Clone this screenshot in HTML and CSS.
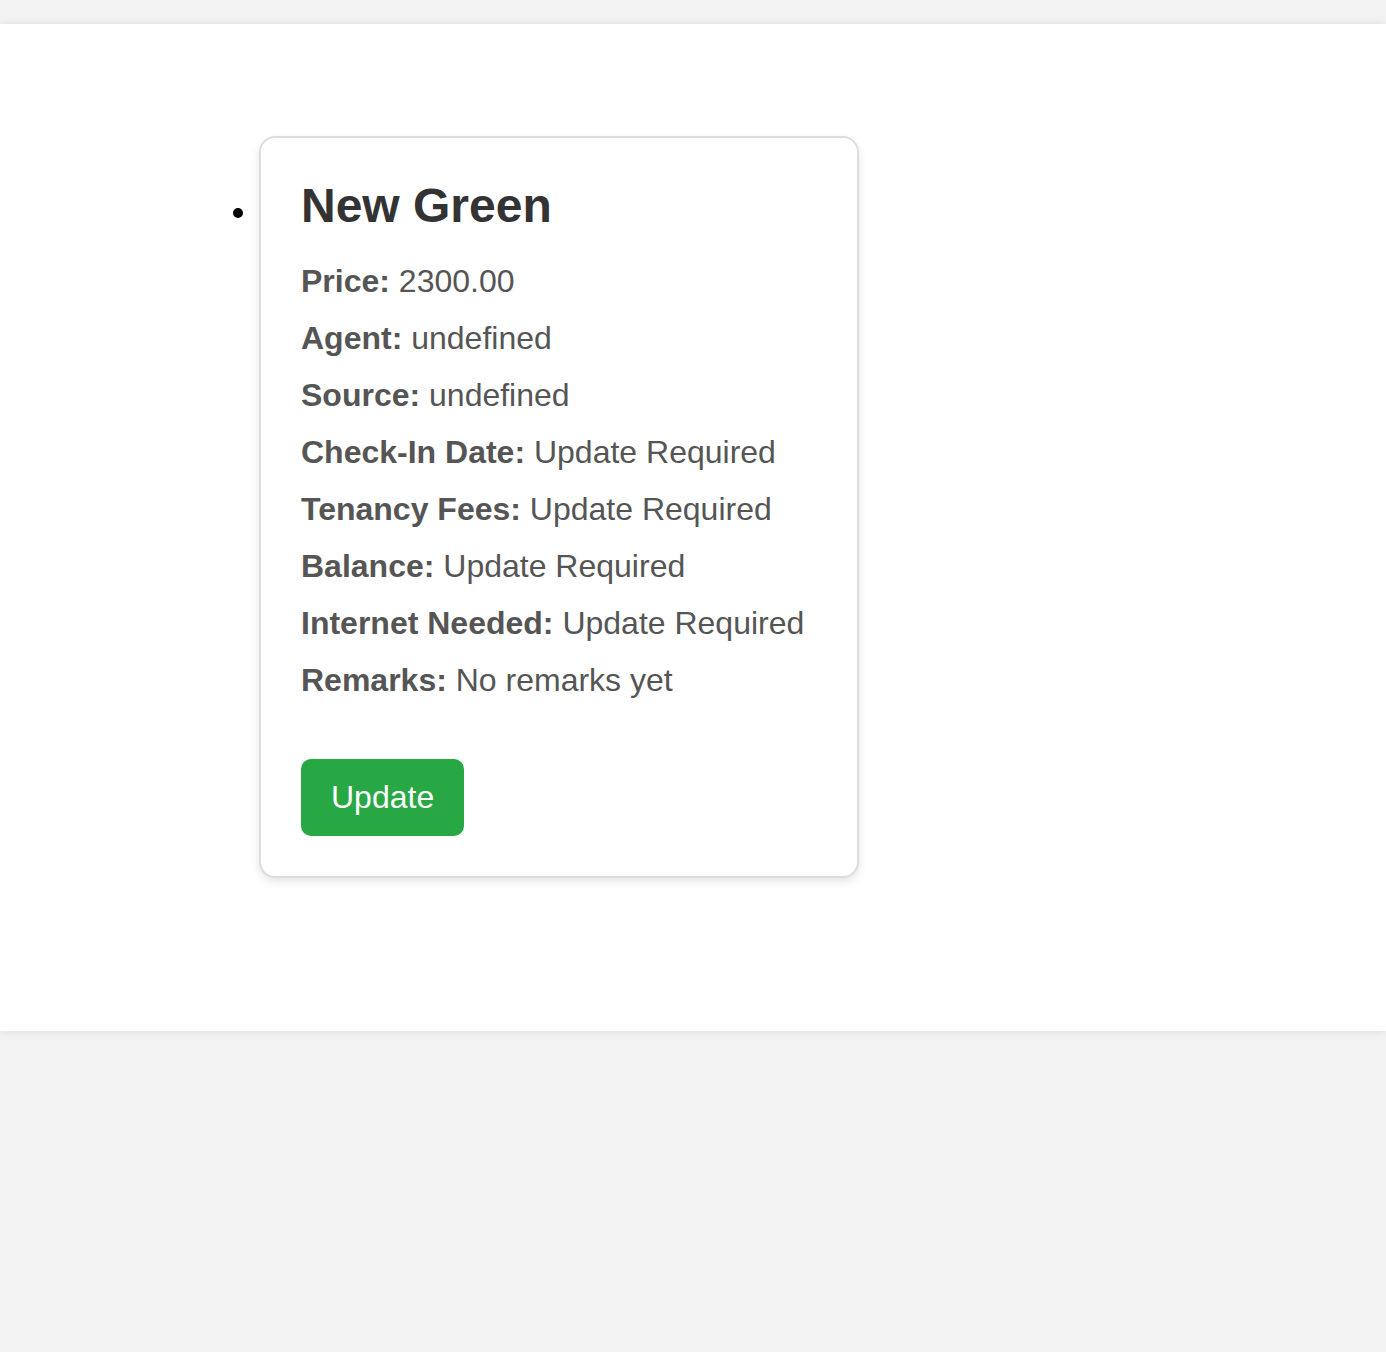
FILE: index.html
```html
<!DOCTYPE html>
<html lang="en">
<head>
<meta charset="utf-8">
<title>Listings</title>
<link rel="stylesheet" href="styles.css">
</head>
<body>
<div class="container">
  <ul class="listings">
    <li class="listing-item">
      <div class="card">
        <h2 class="card-title">New Green</h2>
        <p class="field"><strong>Price:</strong> 2300.00</p>
        <p class="field"><strong>Agent:</strong> undefined</p>
        <p class="field"><strong>Source:</strong> undefined</p>
        <p class="field"><strong>Check-In Date:</strong> Update Required</p>
        <p class="field"><strong>Tenancy Fees:</strong> Update Required</p>
        <p class="field"><strong>Balance:</strong> Update Required</p>
        <p class="field"><strong>Internet Needed:</strong> Update Required</p>
        <p class="field"><strong>Remarks:</strong> No remarks yet</p>
        <div class="actions">
          <button class="btn-update" type="button">Update</button>
        </div>
      </div>
    </li>
  </ul>
</div>
</body>
</html>
```
FILE: styles.css
```css
html, body {
  margin: 0;
  padding: 0;
}
body {
  background: #f3f3f3;
  font-family: "Liberation Sans", Arial, Helvetica, sans-serif;
  font-size: 32px;
  padding-top: 24px;
  min-height: 1352px;
  box-sizing: border-box;
}
.container {
  background: #ffffff;
  box-shadow: 0 0 10px rgba(0, 0, 0, 0.1);
  padding: 112px 0 153px 179px;
}
.listings {
  margin: 0;
  padding-left: 80px;
}
.card {
  width: 600px;
  box-sizing: border-box;
  border: 2px solid #dddddd;
  border-radius: 16px;
  padding: 40px;
  background: #ffffff;
  box-shadow: 0 4px 8px rgba(0, 0, 0, 0.1);
}
.card-title {
  margin: 0 0 30px;
  font-size: 48px;
  font-weight: bold;
  color: #333333;
}
.field {
  margin: 20px 0;
  color: #555555;
}
.field strong {
  font-weight: bold;
}
.actions {
  padding-top: 40px;
}
.btn-update {
  display: block;
  background: #28a745;
  color: #ffffff;
  border: none;
  border-radius: 10px;
  padding: 20px 30px;
  font-family: inherit;
  font-size: 32px;
  line-height: normal;
  cursor: pointer;
}
```
